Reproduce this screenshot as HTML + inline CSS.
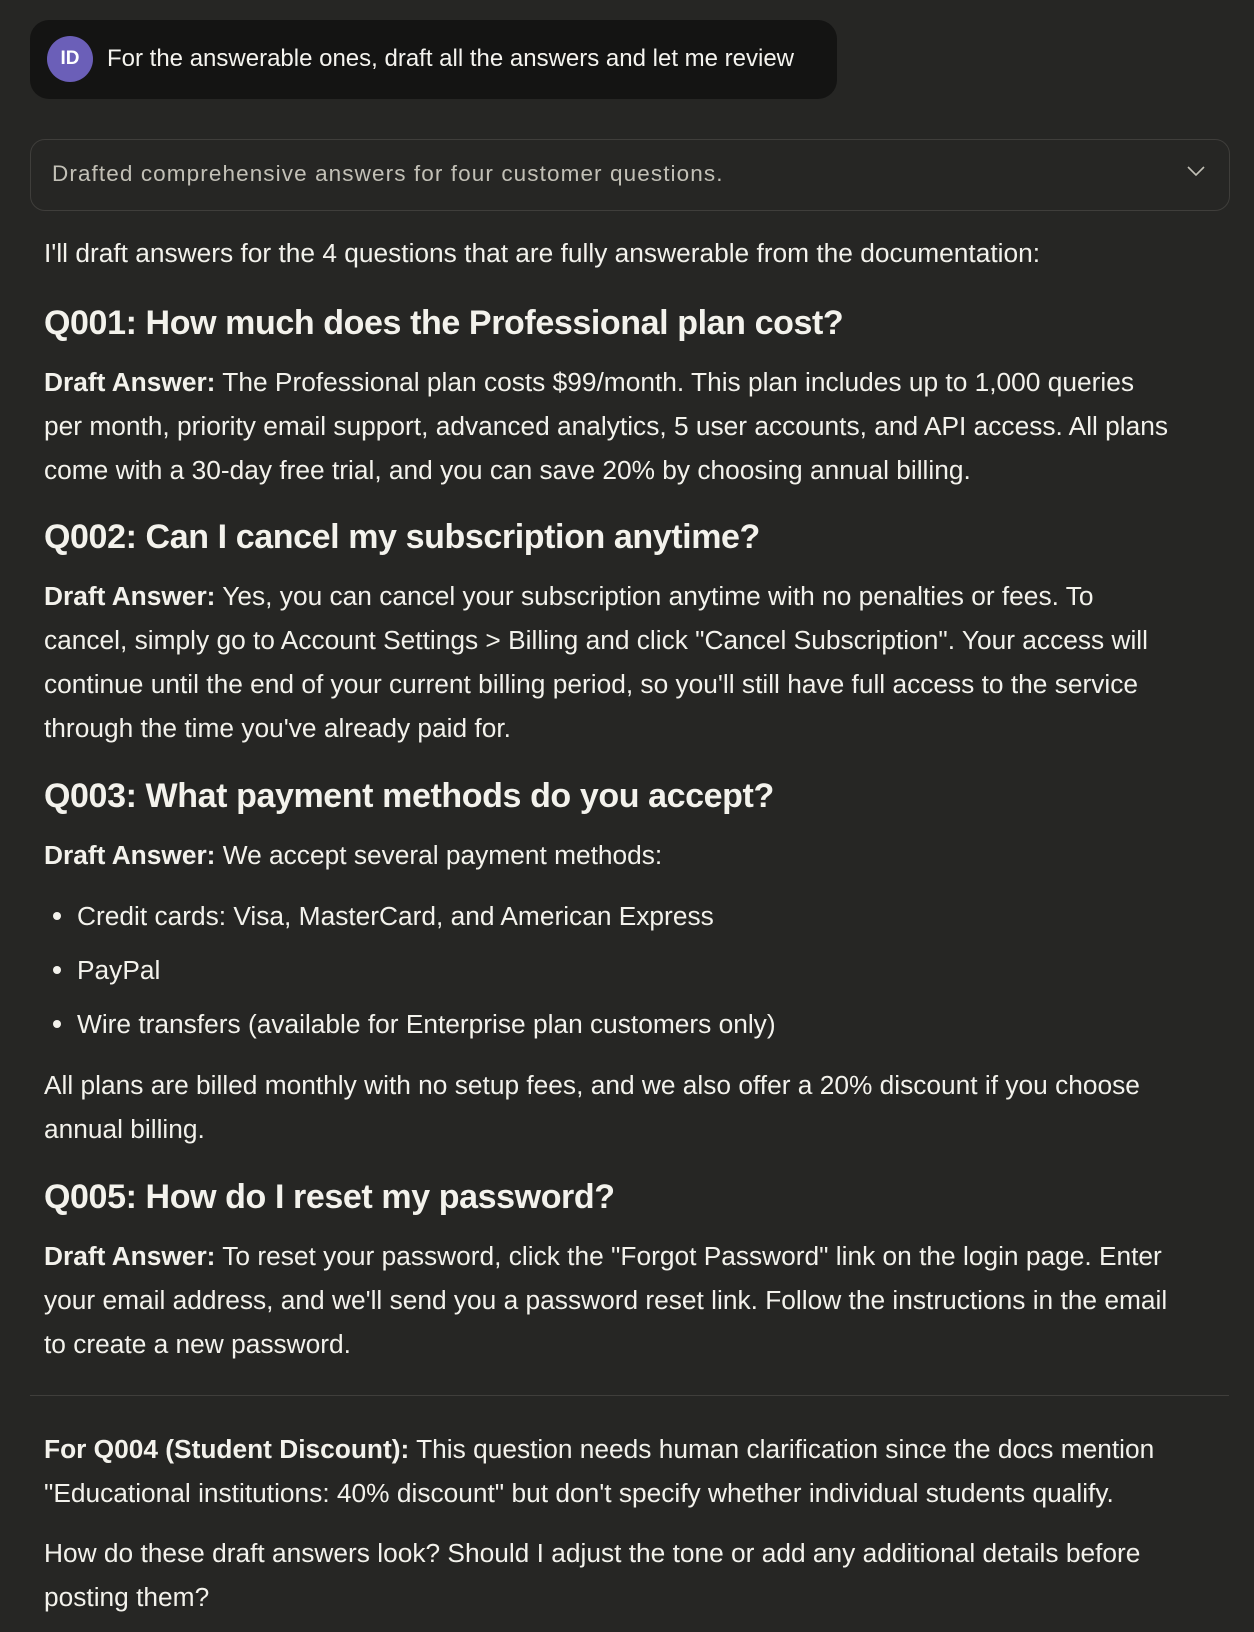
<!DOCTYPE html>
<html><head><meta charset="utf-8"><style>
body{margin:0;width:1254px;height:1632px;background:#262624;font-family:"Liberation Sans",sans-serif;color:#f3f2ec;position:relative;overflow:hidden}
.a{position:absolute;white-space:nowrap}
.p{font-size:26.3px;line-height:44px;left:44px}
.h{font-size:34px;font-weight:bold;left:44px;line-height:44px;letter-spacing:-0.4px}
b{font-weight:bold}
.bul{position:absolute;left:53px;width:8px;height:8px;border-radius:50%;background:#f3f2ec}
</style></head><body>
<div class="a" style="left:30px;top:20px;width:807px;height:79px;background:#141413;border-radius:19px"></div>
<div class="a" style="left:47px;top:36px;width:46px;height:46px;border-radius:50%;background:#6b5fb8;color:#fff;font-weight:bold;font-size:19px;line-height:46px;text-align:center">ID</div>
<div class="a" style="left:107px;top:44px;font-size:24px;line-height:30px;color:#f5f4ef">For the answerable ones, draft all the answers and let me review</div>
<div class="a" style="left:30px;top:139px;width:1198px;height:70px;border:1px solid #3f3e3b;border-radius:15px"></div>
<div class="a" style="left:52px;top:160px;line-height:28px;color:#c2c0b6;font-size:22.5px;letter-spacing:1.1px">Drafted comprehensive answers for four customer questions.</div>
<svg class="a" style="left:1184px;top:163px" width="24" height="16"><path d="M4 4 L12 12 L20 4" stroke="#c2c0b6" stroke-width="1.6" fill="none"/></svg>
<div class="a p" style="top:231px">I'll draft answers for the 4 questions that are fully answerable from the documentation:</div>
<div class="a h" style="top:301px">Q001: How much does the Professional plan cost?</div>
<div class="a p" style="top:360px"><b>Draft Answer:</b> The Professional plan costs $99/month. This plan includes up to 1,000 queries<br>per month, priority email support, advanced analytics, 5 user accounts, and API access. All plans<br>come with a 30-day free trial, and you can save 20% by choosing annual billing.</div>
<div class="a h" style="top:515px">Q002: Can I cancel my subscription anytime?</div>
<div class="a p" style="top:574px"><b>Draft Answer:</b> Yes, you can cancel your subscription anytime with no penalties or fees. To<br>cancel, simply go to Account Settings &gt; Billing and click "Cancel Subscription". Your access will<br>continue until the end of your current billing period, so you'll still have full access to the service<br>through the time you've already paid for.</div>
<div class="a h" style="top:774px">Q003: What payment methods do you accept?</div>
<div class="a p" style="top:833px"><b>Draft Answer:</b> We accept several payment methods:</div>
<div class="bul" style="top:912px"></div><div class="a p" style="left:77px;top:894px">Credit cards: Visa, MasterCard, and American Express</div>
<div class="bul" style="top:966px"></div><div class="a p" style="left:77px;top:948px">PayPal</div>
<div class="bul" style="top:1020px"></div><div class="a p" style="left:77px;top:1002px">Wire transfers (available for Enterprise plan customers only)</div>
<div class="a p" style="top:1063px">All plans are billed monthly with no setup fees, and we also offer a 20% discount if you choose<br>annual billing.</div>
<div class="a h" style="top:1175px">Q005: How do I reset my password?</div>
<div class="a p" style="top:1234px"><b>Draft Answer:</b> To reset your password, click the "Forgot Password" link on the login page. Enter<br>your email address, and we'll send you a password reset link. Follow the instructions in the email<br>to create a new password.</div>
<div class="a" style="left:30px;top:1395px;width:1199px;height:1px;background:#3f3e3b"></div>
<div class="a p" style="top:1427px"><b>For Q004 (Student Discount):</b> This question needs human clarification since the docs mention<br>"Educational institutions: 40% discount" but don't specify whether individual students qualify.</div>
<div class="a p" style="top:1531px">How do these draft answers look? Should I adjust the tone or add any additional details before<br>posting them?</div>
</body></html>
